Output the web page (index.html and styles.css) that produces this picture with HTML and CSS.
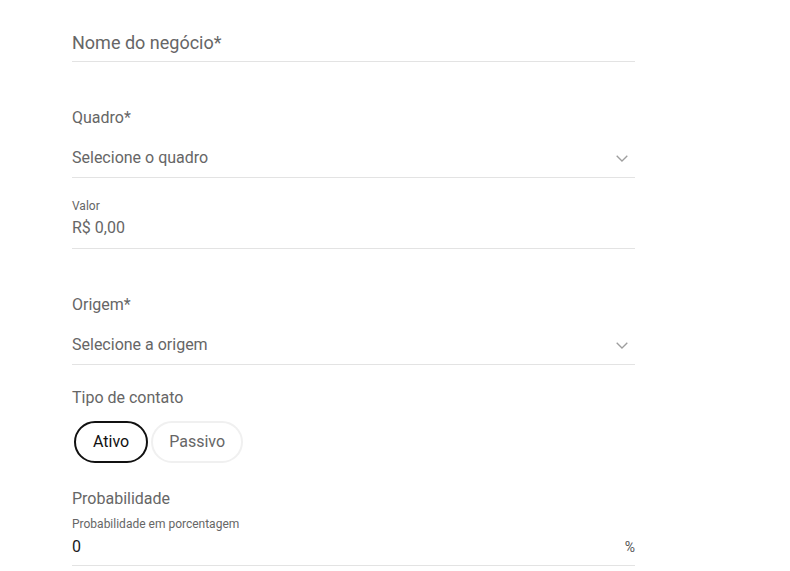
FILE: index.html
```html
<!DOCTYPE html>
<html lang="pt-BR">
<head>
<meta charset="utf-8">
<title>Negócio</title>
<link rel="stylesheet" href="styles.css">
</head>
<body>
<form class="form">
  <div class="field field-name">
    <div class="input input-lg">Nome do negócio*</div>
  </div>

  <div class="field field-board">
    <div class="label">Quadro*</div>
    <div class="input select">
      <span>Selecione o quadro</span>
      <svg class="chevron" width="12" height="7" viewBox="0 0 12 7"><path d="M0.7 0.7 L6 6 L11.3 0.7" fill="none" stroke="#9e9e9e" stroke-width="1.3"/></svg>
    </div>
  </div>

  <div class="field field-value">
    <div class="label-sm">Valor</div>
    <div class="input input-tight">R$ 0,00</div>
  </div>

  <div class="field field-origin">
    <div class="label">Origem*</div>
    <div class="input select">
      <span>Selecione a origem</span>
      <svg class="chevron" width="12" height="7" viewBox="0 0 12 7"><path d="M0.7 0.7 L6 6 L11.3 0.7" fill="none" stroke="#9e9e9e" stroke-width="1.3"/></svg>
    </div>
  </div>

  <div class="field field-type">
    <div class="label">Tipo de contato</div>
    <div class="toggles">
      <button type="button" class="chip chip-active">Ativo</button>
      <button type="button" class="chip">Passivo</button>
    </div>
  </div>

  <div class="field field-prob">
    <div class="label">Probabilidade</div>
    <div class="label-sm label-sm-gap">Probabilidade em porcentagem</div>
    <div class="input input-prob">
      <span class="value">0</span>
      <span class="suffix">%</span>
    </div>
  </div>
</form>
</body>
</html>
```

FILE: styles.css
```css
html, body {
  margin: 0;
  padding: 0;
  background: #ffffff;
}

body {
  font-family: Roboto, "Liberation Sans", Arial, sans-serif;
  color: #666666;
}

.form {
  width: 563px;
  padding: 31px 0 0 72px;
}

.field {
  display: flex;
  flex-direction: column;
}

.label {
  font-size: 16px;
  line-height: 24px;
  color: #666666;
}

.label-sm {
  font-size: 12px;
  line-height: 16px;
  color: #666666;
}

.input {
  font-size: 16px;
  line-height: 24px;
  color: #666666;
  border-bottom: 1px solid #e3e3e3;
  padding-bottom: 8px;
}

.input-lg {
  font-size: 18px;
  line-height: 24px;
  padding-bottom: 6px;
}

.select {
  display: flex;
  align-items: center;
  justify-content: space-between;
  margin-top: 16px;
  padding-bottom: 7px;
}

.chevron {
  margin-right: 7px;
}

.field-board {
  margin-top: 44px;
}

.field-value {
  margin-top: 20px;
}

.input-tight {
  margin-top: 2px;
}

.field-origin {
  margin-top: 44px;
}

.field-type {
  margin-top: 21px;
}

.toggles {
  display: flex;
  gap: 3px;
  margin-top: 11px;
  padding-left: 2px;
}

.chip {
  font-family: inherit;
  font-size: 16px;
  height: 42px;
  padding: 0 16px 2px;
  border-radius: 21px;
  background: #ffffff;
  border: 2px solid #f0f0f0;
  color: #666666;
}

.chip-active {
  padding: 0 17px 2px;
  border-color: #111111;
  color: #111111;
}

.field-prob {
  margin-top: 24px;
}

.label-sm-gap {
  margin-top: 5px;
}

.input-prob {
  display: flex;
  justify-content: space-between;
  margin-top: 3px;
  padding-bottom: 6px;
}

.value {
  color: #1a1a1a;
}

.suffix {
  font-size: 14px;
  color: #555555;
}
```
